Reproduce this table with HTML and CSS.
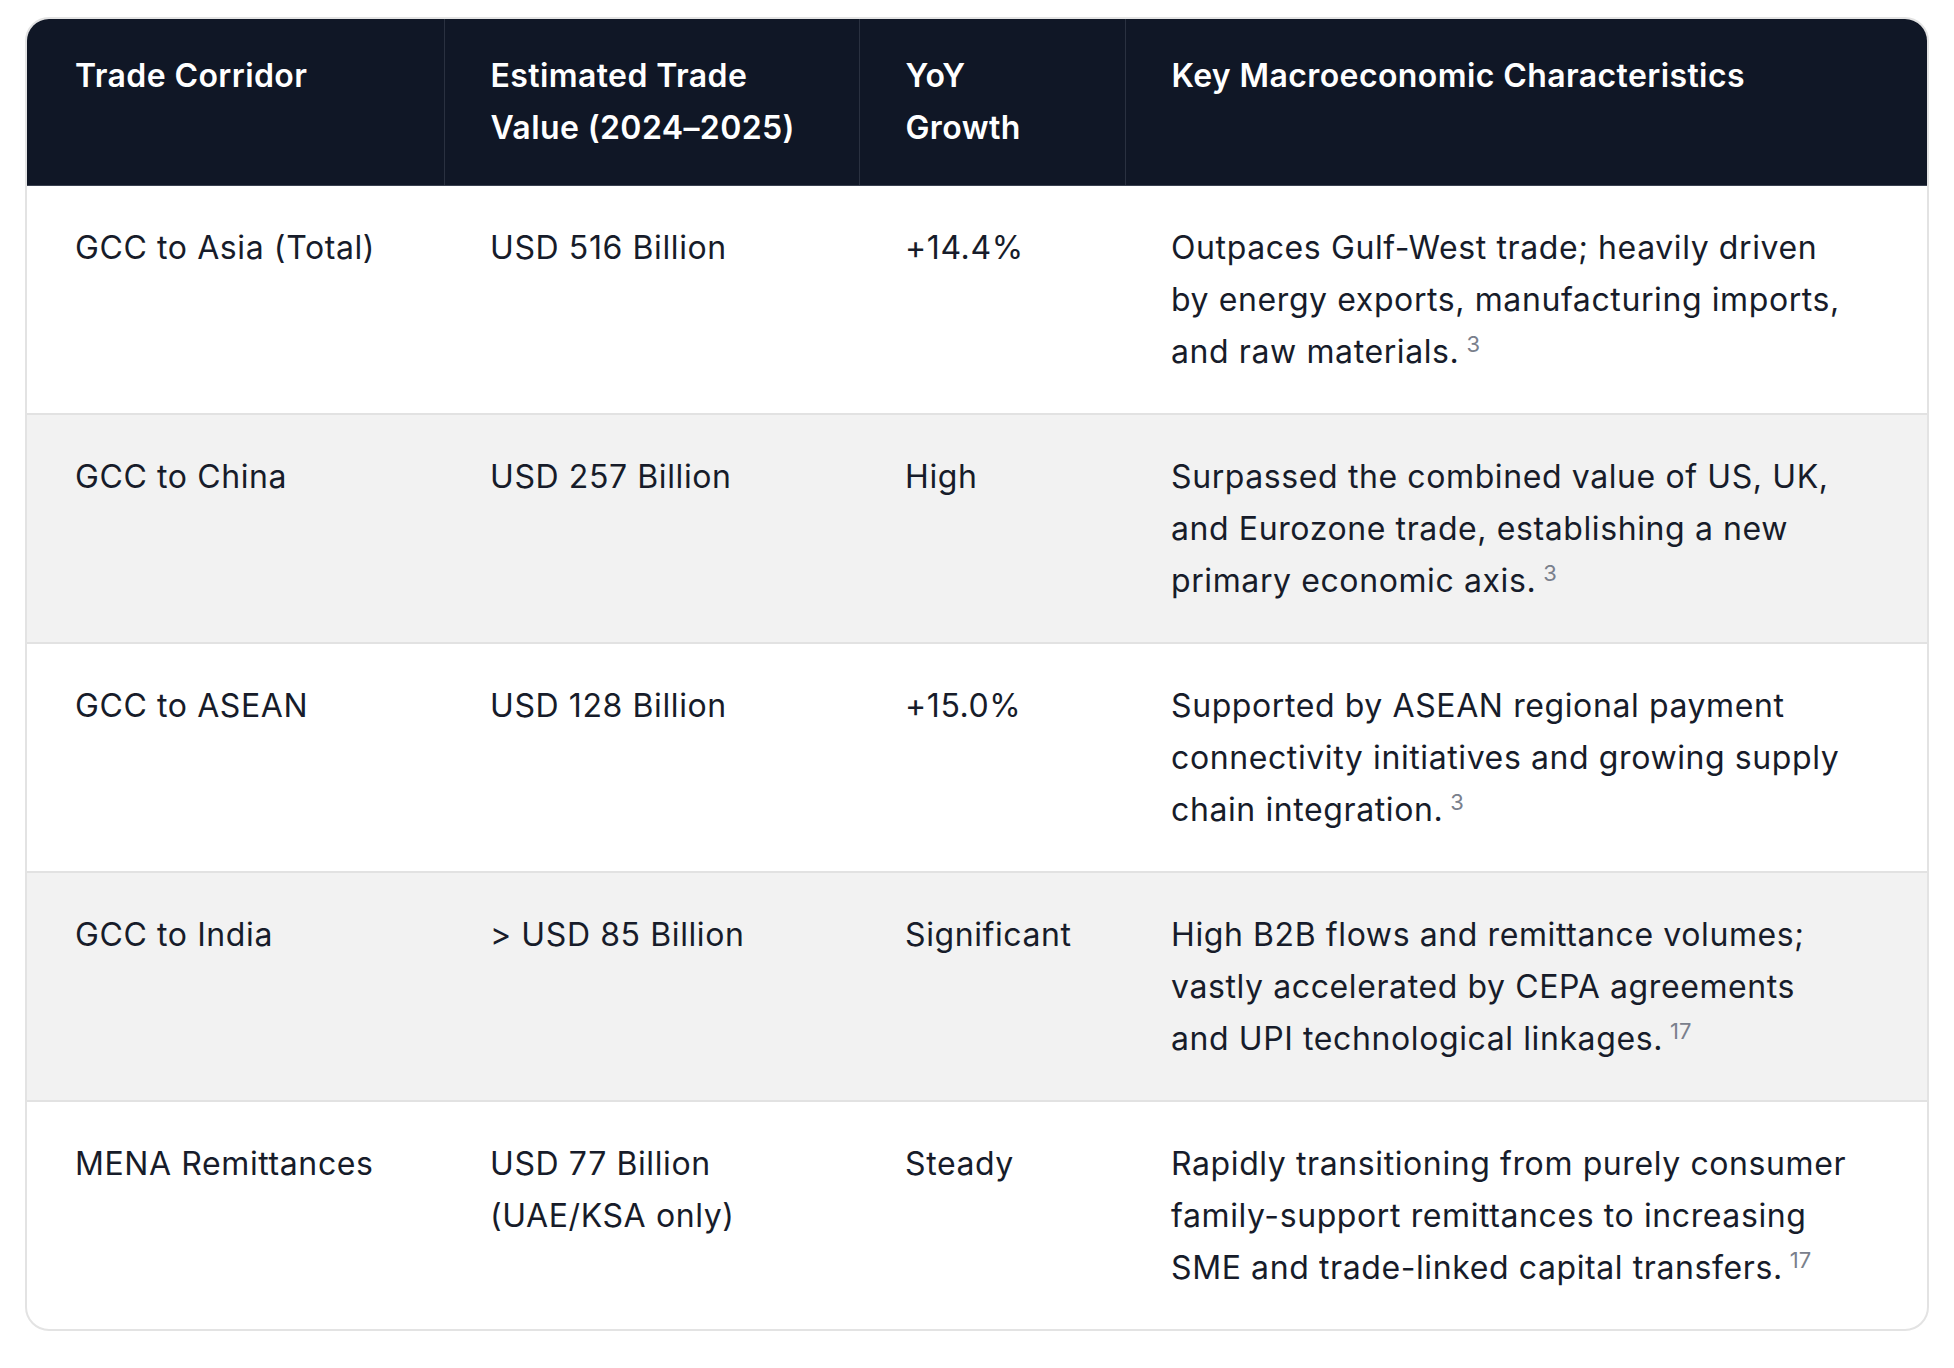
FILE: index.html
```html
<!DOCTYPE html>
<html lang="en">
<head>
<meta charset="utf-8">
<title>GCC Trade Corridors</title>
<link rel="stylesheet" href="styles.css">
</head>
<body>
<div class="page">
  <div class="table-wrap">
    <table class="trade-table">
      <colgroup>
        <col class="c1"><col class="c2"><col class="c3"><col class="c4">
      </colgroup>
      <thead>
        <tr>
          <th>Trade Corridor</th>
          <th>Estimated Trade<br>Value (2024–2025)</th>
          <th>YoY<br>Growth</th>
          <th>Key Macroeconomic Characteristics</th>
        </tr>
      </thead>
      <tbody>
        <tr>
          <td>GCC to Asia (Total)</td>
          <td>USD 516 Billion</td>
          <td>+14.4%</td>
          <td>Outpaces Gulf-West trade; heavily driven<br>by energy exports, manufacturing imports,<br>and raw materials.<sup class="ref">3</sup></td>
        </tr>
        <tr class="alt">
          <td>GCC to China</td>
          <td>USD 257 Billion</td>
          <td>High</td>
          <td>Surpassed the combined value of US, UK,<br>and Eurozone trade, establishing a new<br>primary economic axis.<sup class="ref">3</sup></td>
        </tr>
        <tr>
          <td>GCC to ASEAN</td>
          <td>USD 128 Billion</td>
          <td>+15.0%</td>
          <td>Supported by ASEAN regional payment<br>connectivity initiatives and growing supply<br>chain integration.<sup class="ref">3</sup></td>
        </tr>
        <tr class="alt">
          <td>GCC to India</td>
          <td>&gt; USD 85 Billion</td>
          <td>Significant</td>
          <td>High B2B flows and remittance volumes;<br>vastly accelerated by CEPA agreements<br>and UPI technological linkages.<sup class="ref">17</sup></td>
        </tr>
        <tr>
          <td>MENA Remittances</td>
          <td>USD 77 Billion<br>(UAE/KSA only)</td>
          <td>Steady</td>
          <td>Rapidly transitioning from purely consumer<br>family-support remittances to increasing<br>SME and trade-linked capital transfers.<sup class="ref">17</sup></td>
        </tr>
      </tbody>
    </table>
  </div>
</div>
</body>
</html>
```

FILE: styles.css
```css
html, body {
  margin: 0;
  padding: 0;
  background: #ffffff;
}

body {
  font-family: "Inter", "Noto Sans", "Liberation Sans", sans-serif;
  color: #171c2a;
}

.page {
  padding: 17px 25px 30px 25px;
}

.table-wrap {
  border: 2px solid #e3e3e3;
  border-radius: 24px;
  overflow: hidden;
  background: #ffffff;
}

.trade-table {
  width: 100%;
  border-collapse: collapse;
  table-layout: fixed;
}

.c1 { width: 417px; }
.c2 { width: 415px; }
.c3 { width: 266px; }
.c4 { width: auto; }

.trade-table th {
  background: #101726;
  color: #ffffff;
  font-weight: 600;
  font-size: 32px;
  letter-spacing: 0.4px;
  line-height: 52px;
  text-align: left;
  vertical-align: top;
  padding: 31px 30px 31px 46px;
  border-left: 1px solid #2a3140;
  border-bottom: 1px solid #3a4150;
  white-space: nowrap;
}

.trade-table th:first-child {
  border-left: none;
  padding-left: 48px;
}

.trade-table td {
  font-size: 32px;
  letter-spacing: 0.6px;
  line-height: 52px;
  vertical-align: top;
  padding: 36px 20px 35px 46px;
  border-top: 2px solid #e2e2e2;
  white-space: nowrap;
}

.trade-table td:first-child {
  padding-left: 48px;
}

.trade-table tbody tr:first-child td {
  border-top: none;
}

.trade-table tr.alt td {
  background: #f2f2f2;
}

.ref {
  font-size: 22px;
  letter-spacing: 0;
  line-height: 0;
  vertical-align: 0.5em;
  margin-left: 7px;
  color: #7a808c;
}
```
